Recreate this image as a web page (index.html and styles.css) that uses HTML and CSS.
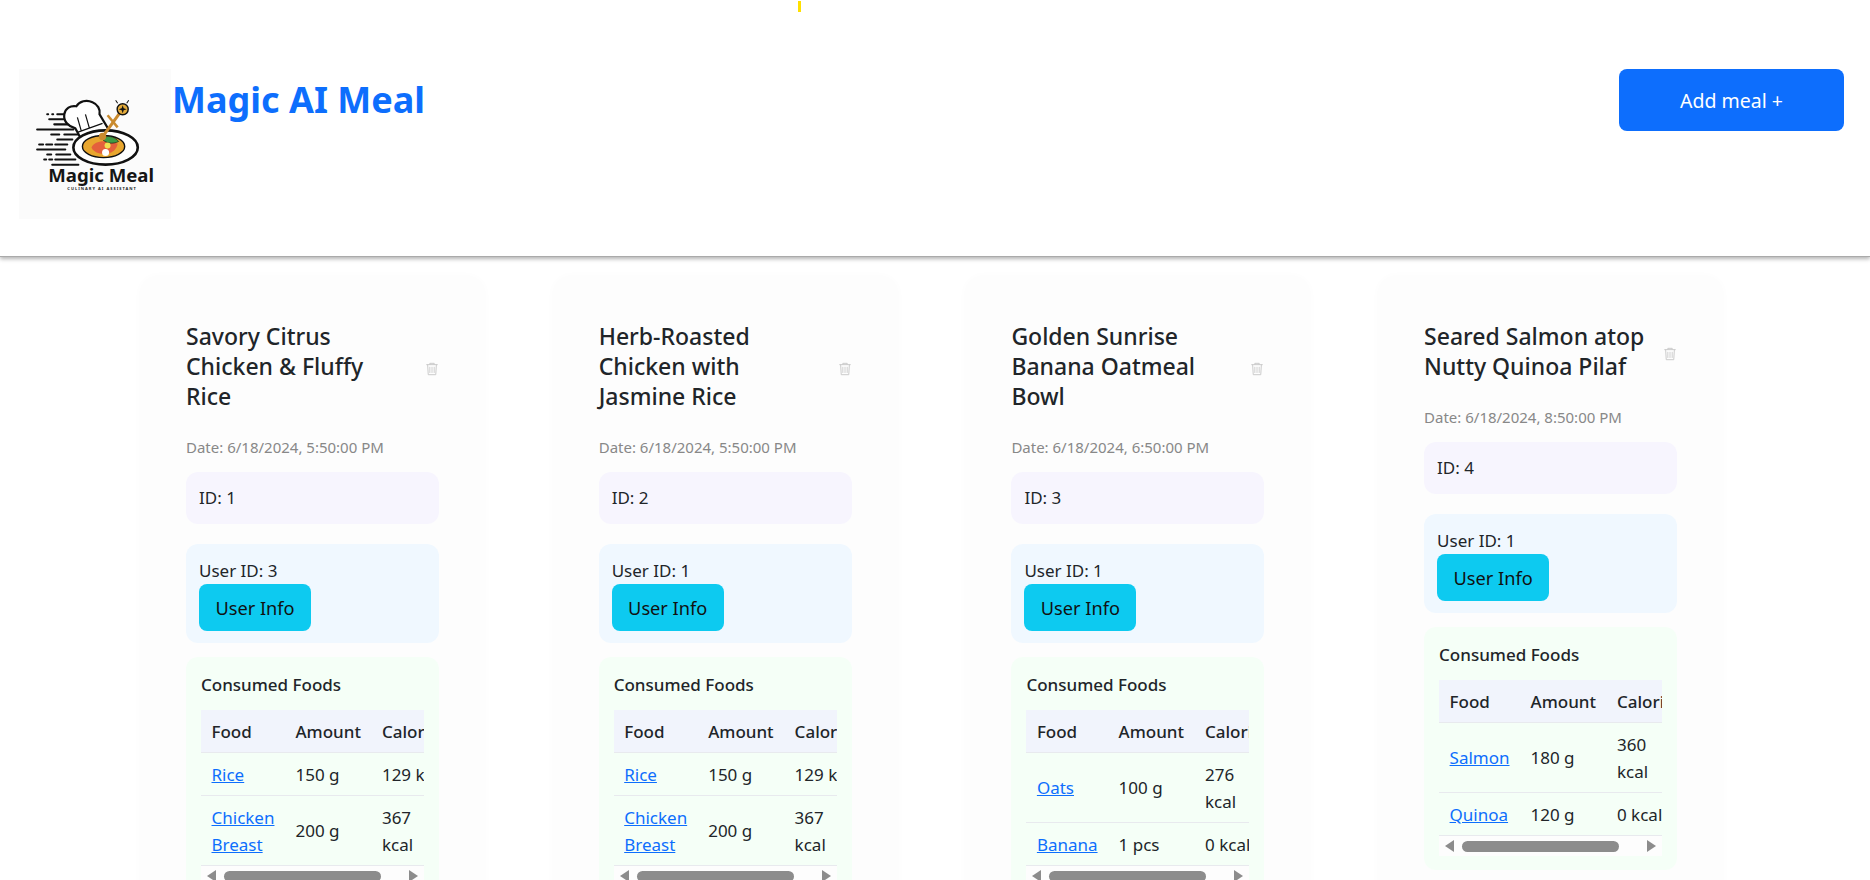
FILE: index.html
```html
<!DOCTYPE html>
<html lang="en">
<head>
<meta charset="utf-8">
<title>Magic AI Meal</title>
<link rel="stylesheet" href="styles.css">
</head>
<body>
<span class="spark"></span>
<header class="topbar">
  <div class="brand">
    <svg class="logo" viewBox="0 0 151 149" xmlns="http://www.w3.org/2000/svg">
      <rect width="151" height="149" fill="#fbfbfb"/>
      <g stroke="#111" stroke-width="2" stroke-linecap="round">
        <path d="M28 45h1M33 45h1M38 45h9M30 50h18M35 55h18M18 60h36M45 65h20M32 65h8M38 70h15M20 75h4M27 75h6M36 75h12M18 80h28M28 85h4M37 85h14M25 90h2M30 90h3M36 90h20M33 95h26"/>
      </g>
      <path d="M56 59c-7-2-12-7-11-14 1-6 6-9 12-8 3-5 10-7 16-4 5 2 8 7 7 12l9 15-27 10-6-11z" fill="#fff" stroke="#111" stroke-width="2.200"/>
      <path d="M58 48l4 14M66 45l4 14M58 63l25-9" fill="none" stroke="#111" stroke-width="1.200"/>
      <ellipse cx="86" cy="78" rx="32" ry="17" fill="#fff" stroke="#111" stroke-width="2.600"/>
      <ellipse cx="84" cy="77" rx="21" ry="11" fill="#e8a62f" stroke="#111" stroke-width="1.400"/>
      <path d="M72 78c2-5 9-7 15-6l11 2c-1 6-5 9-10 10-6 1-13 0-16-6z" fill="#e4603c"/>
      <path d="M82 69c5-3 12-3 17 3-6 3-13 2-17-3z" fill="#3f9b45" stroke="#111" stroke-width=".6"/>
      <circle cx="88" cy="76" r="3" fill="#f0df50"/>
      <circle cx="86" cy="83" r="3.500" fill="#fff"/>
      <path d="M84 66l18-25" stroke="#c98a2e" stroke-width="3" stroke-linecap="round"/>
      <path d="M88 46l10 12" stroke="#c98a2e" stroke-width="2.500"/>
      <circle cx="83" cy="67" r="3.600" fill="#c98a2e"/>
      <circle cx="103" cy="40" r="5.500" fill="#e3ab3c" stroke="#111" stroke-width="1.400"/>
      <path d="M103 36l1 3 3 1-3 1-1 3-1-3-3-1 3-1z" fill="#111"/>
      <path d="M96 31l2 3M109 31l-2 3" stroke="#111" stroke-width="1"/>
      <text class="logo-name" x="29" y="112">Magic Meal</text>
      <text class="logo-tag" x="48" y="120.500">CULINARY AI ASSISTANT</text>
    </svg>
    <h1 class="app-title">Magic AI Meal</h1>
  </div>
  <button class="add-btn">Add meal +</button>
</header>

<main class="cards">

  <article class="card">
    <div class="card-head">
      <h2 class="card-title">Savory Citrus Chicken &amp; Fluffy Rice</h2>
      <svg class="trash" viewBox="0 0 16 16"><path d="M5.500 5.500v7M8 5.500v7M10.500 5.500v7" fill="none" stroke="currentColor"/><path d="M1.500 3h13M5.500 3V1.500h5V3M3 3l.7 11.500h8.600L13 3" fill="none" stroke="currentColor" stroke-width="1.100"/></svg>
    </div>
    <p class="date">Date: 6/18/2024, 5:50:00 PM</p>
    <div class="panel panel-id">ID: 1</div>
    <div class="panel panel-user">
      <div>User ID: 3</div>
      <button class="user-btn">User Info</button>
    </div>
    <section class="foods">
      <h3 class="foods-title">Consumed Foods</h3>
      <div class="table-wrap">
        <table class="food-table">
          <thead><tr><th>Food</th><th>Amount</th><th>Calories</th></tr></thead>
          <tbody>
            <tr><td><a href="#">Rice</a></td><td>150 g</td><td>129 kcal</td></tr>
            <tr><td><a href="#">Chicken<br>Breast</a></td><td>200 g</td><td>367<br>kcal</td></tr>
          </tbody>
        </table>
      </div>
      <div class="hscroll"><i class="arrow-l"></i><b class="thumb"></b><i class="arrow-r"></i></div>
    </section>
  </article>

  <article class="card">
    <div class="card-head">
      <h2 class="card-title">Herb-Roasted Chicken with Jasmine Rice</h2>
      <svg class="trash" viewBox="0 0 16 16"><path d="M5.500 5.500v7M8 5.500v7M10.500 5.500v7" fill="none" stroke="currentColor"/><path d="M1.500 3h13M5.500 3V1.500h5V3M3 3l.7 11.500h8.600L13 3" fill="none" stroke="currentColor" stroke-width="1.100"/></svg>
    </div>
    <p class="date">Date: 6/18/2024, 5:50:00 PM</p>
    <div class="panel panel-id">ID: 2</div>
    <div class="panel panel-user">
      <div>User ID: 1</div>
      <button class="user-btn">User Info</button>
    </div>
    <section class="foods">
      <h3 class="foods-title">Consumed Foods</h3>
      <div class="table-wrap">
        <table class="food-table">
          <thead><tr><th>Food</th><th>Amount</th><th>Calories</th></tr></thead>
          <tbody>
            <tr><td><a href="#">Rice</a></td><td>150 g</td><td>129 kcal</td></tr>
            <tr><td><a href="#">Chicken<br>Breast</a></td><td>200 g</td><td>367<br>kcal</td></tr>
          </tbody>
        </table>
      </div>
      <div class="hscroll"><i class="arrow-l"></i><b class="thumb"></b><i class="arrow-r"></i></div>
    </section>
  </article>

  <article class="card">
    <div class="card-head">
      <h2 class="card-title">Golden Sunrise Banana Oatmeal Bowl</h2>
      <svg class="trash" viewBox="0 0 16 16"><path d="M5.500 5.500v7M8 5.500v7M10.500 5.500v7" fill="none" stroke="currentColor"/><path d="M1.500 3h13M5.500 3V1.500h5V3M3 3l.7 11.500h8.600L13 3" fill="none" stroke="currentColor" stroke-width="1.100"/></svg>
    </div>
    <p class="date">Date: 6/18/2024, 6:50:00 PM</p>
    <div class="panel panel-id">ID: 3</div>
    <div class="panel panel-user">
      <div>User ID: 1</div>
      <button class="user-btn">User Info</button>
    </div>
    <section class="foods">
      <h3 class="foods-title">Consumed Foods</h3>
      <div class="table-wrap">
        <table class="food-table">
          <thead><tr><th>Food</th><th>Amount</th><th>Calories</th></tr></thead>
          <tbody>
            <tr><td><a href="#">Oats</a></td><td>100 g</td><td>276<br>kcal</td></tr>
            <tr><td><a href="#">Banana</a></td><td>1 pcs</td><td>0 kcal</td></tr>
          </tbody>
        </table>
      </div>
      <div class="hscroll"><i class="arrow-l"></i><b class="thumb"></b><i class="arrow-r"></i></div>
    </section>
  </article>

  <article class="card">
    <div class="card-head">
      <h2 class="card-title">Seared Salmon atop Nutty Quinoa Pilaf</h2>
      <svg class="trash" viewBox="0 0 16 16"><path d="M5.500 5.500v7M8 5.500v7M10.500 5.500v7" fill="none" stroke="currentColor"/><path d="M1.500 3h13M5.500 3V1.500h5V3M3 3l.7 11.500h8.600L13 3" fill="none" stroke="currentColor" stroke-width="1.100"/></svg>
    </div>
    <p class="date">Date: 6/18/2024, 8:50:00 PM</p>
    <div class="panel panel-id">ID: 4</div>
    <div class="panel panel-user">
      <div>User ID: 1</div>
      <button class="user-btn">User Info</button>
    </div>
    <section class="foods">
      <h3 class="foods-title">Consumed Foods</h3>
      <div class="table-wrap">
        <table class="food-table">
          <thead><tr><th>Food</th><th>Amount</th><th>Calories</th></tr></thead>
          <tbody>
            <tr><td><a href="#">Salmon</a></td><td>180 g</td><td>360<br>kcal</td></tr>
            <tr><td><a href="#">Quinoa</a></td><td>120 g</td><td>0 kcal</td></tr>
          </tbody>
        </table>
      </div>
      <div class="hscroll"><i class="arrow-l"></i><b class="thumb"></b><i class="arrow-r"></i></div>
    </section>
  </article>

</main>
</body>
</html>
```
FILE: styles.css
```css
* { box-sizing: border-box; }
html, body { height: 100%; }
body {
  margin: 0;
  height: 880px;
  overflow: hidden;
  position: relative;
  background: #fff;
  color: #212529;
  font-family: "Noto Sans", "Open Sans", sans-serif;
  font-size: 16px;
}
.spark {
  position: absolute;
  z-index: 2;
  left: 798px;
  top: 1px;
  width: 3px;
  height: 11px;
  background: #ffe000;
}
.topbar {
  height: 257px;
  padding: 69px 26px 0 19px;
  display: flex;
  justify-content: space-between;
  align-items: flex-start;
  background: #fff;
  border-bottom: 1px solid #aaa;
  box-shadow: 0 2px 4px rgba(0, 0, 0, .3);
  position: relative;
}
.brand { display: flex; align-items: flex-start; }
.logo { width: 152px; height: 150px; display: block; flex: none; }
.logo-name { font: 700 18.500px "Noto Sans", sans-serif; fill: #151515; }
.logo-tag { font: 700 4px "Noto Sans", sans-serif; letter-spacing: 1px; fill: #222; }
.app-title {
  margin: 4px 0 0 1px;
  font-size: 36px;
  line-height: 54px;
  font-weight: 700;
  color: #0d6efd;
}
.add-btn {
  width: 225px;
  height: 62px;
  padding-top: 2px;
  border: 0;
  border-radius: 8px;
  background: #0d6efd;
  color: #fff;
  font: inherit;
  font-size: 19.500px;
}
.cards {
  display: flex;
  gap: 67.700px;
  padding: 19px 0 0 140px;
  align-items: flex-start;
}
.card {
  width: 345px;
  flex: none;
  padding: 45px 46px 30px;
  border-radius: 18px;
  background: #fdfdfd;
  box-shadow: 0 0 8px rgba(0, 0, 0, .02);
}
.card-head {
  display: flex;
  align-items: center;
  justify-content: space-between;
  gap: 14px;
}
.card-title {
  margin: 0;
  font-size: 23px;
  line-height: 30px;
  font-weight: 500;
}
.trash { width: 14px; height: 16px; flex: none; color: #c9c9c9; margin-top: 6px; }
.date {
  margin: 25px 0 13px;
  font-size: 15px;
  line-height: 23px;
  color: #888;
}
.panel {
  padding: 13px;
  border-radius: 12px;
  line-height: 26px;
  font-size: 17px;
}
.panel-id { background: #f7f5fe; margin-bottom: 20px; }
.panel-user { background: #f0f8ff; margin-bottom: 14px; padding-top: 14px; padding-bottom: 12px; }
.user-btn {
  display: block;
  width: 112px;
  height: 47px;
  border: 0;
  border-radius: 8px;
  background: #0dcaf0;
  color: #111;
  font: inherit;
  font-size: 18.200px;
}
.foods {
  padding: 14px 15px 14px;
  border-radius: 12px;
  background: #f5fff7;
}
.foods-title {
  margin: 0 0 12px;
  font-size: 17px;
  line-height: 27px;
  font-weight: 500;
}
.table-wrap { overflow: hidden; }
.food-table {
  border-collapse: collapse;
  white-space: nowrap;
  line-height: 27px;
  font-size: 17px;
}
.food-table th {
  background: #f1f4fc;
  font-weight: 500;
  text-align: left;
  padding: 7.500px 10.500px;
  border-bottom: 1px solid #e8eaee;
}
.food-table td {
  padding: 7.500px 10.500px;
  border-bottom: 1px solid #e8eaee;
}
.food-table a { color: #0d6efd; }
.hscroll {
  height: 20px;
  background: #fdfdfd;
  display: flex;
  align-items: center;
  padding: 0 6px;
}
.arrow-l, .arrow-r { width: 0; height: 0; border-top: 6px solid transparent; border-bottom: 6px solid transparent; }
.arrow-l { border-right: 9px solid #8c8c8c; }
.arrow-r { border-left: 9px solid #8c8c8c; margin-left: 28px; }
.thumb {
  width: 157px;
  height: 11px;
  margin-left: 8px;
  border-radius: 6px;
  background: #8c8c8c;
}
```
